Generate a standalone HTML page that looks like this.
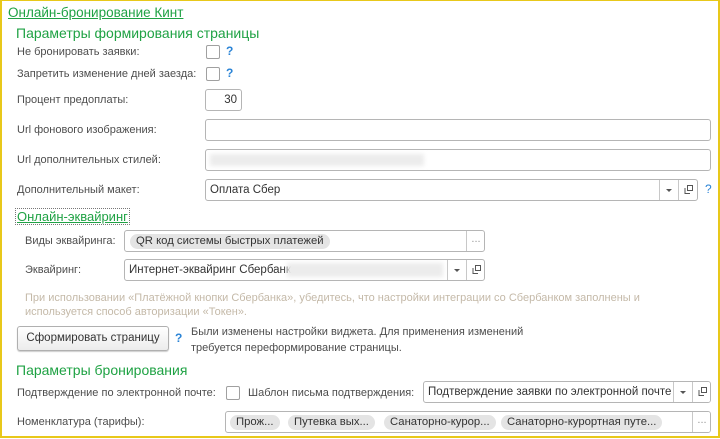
<!DOCTYPE html>
<html><head><meta charset="utf-8"><style>
body{margin:0;width:720px;height:439px;background:#fff;position:relative;overflow:hidden;font-family:"Liberation Sans",Arial,sans-serif;font-size:11px;color:#4d4d4d}
.frame{position:absolute;left:0;top:0;width:716px;height:435px;border:2px solid #e8c81a;border-top:1px solid #e8c81a;}
.a{position:absolute;white-space:nowrap;line-height:14px}
.g{color:#1fa244}
.h{font-size:14px;line-height:17px}
.in{position:absolute;border:1px solid #b5b5b5;border-radius:3px;background:#fff;height:20px;box-sizing:content-box;overflow:hidden}
.in span.t{position:absolute;left:4px;top:4px;color:#333;white-space:nowrap;font-size:11.5px}
.cb{position:absolute;width:12px;height:12px;border:1px solid #a0a0a0;border-radius:2px;background:#fff}
.q{position:absolute;color:#2b84d6;font-weight:bold;font-size:12px}
.btnp{position:absolute;top:0;width:18px;height:20px;border-left:1px solid #c8c8c8;text-align:center;color:#555}
.pill{position:absolute;top:3px;height:15px;line-height:15px;background:#e4e4e4;border-radius:8px;padding:0 6px;color:#333;white-space:nowrap;font-size:11.3px}
.blur{position:absolute;background:#ececec;filter:blur(2px)}
.arr{position:absolute;left:6px;top:9px;width:0;height:0;border-left:3px solid transparent;border-right:3px solid transparent;border-top:3px solid #555}
.cp{position:absolute;left:5px;top:5px;width:9px;height:9px}
</style></head><body>
<div class="frame"></div>
<div class="a g" style="left:8px;top:5px;font-size:13.5px;line-height:16px;text-decoration:underline">Онлайн-бронирование Кинт</div>
<div class="a g h" style="left:16px;top:25px">Параметры формирования страницы</div>

<div class="a" style="left:17px;top:45px">Не бронировать заявки:</div>
<div class="cb" style="left:206px;top:45px"></div><div class="q" style="left:226px;top:44px">?</div>
<div class="a" style="left:17px;top:67px">Запретить изменение дней заезда:</div>
<div class="cb" style="left:206px;top:67px"></div><div class="q" style="left:226px;top:66px">?</div>

<div class="a" style="left:17px;top:93px">Процент предоплаты:</div>
<div class="in" style="left:205px;top:89px;width:35px"><span class="t" style="left:auto;right:4px">30</span></div>

<div class="a" style="left:17px;top:123px">Url фонового изображения:</div>
<div class="in" style="left:205px;top:119px;width:504px"></div>
<div class="a" style="left:17px;top:153px">Url дополнительных стилей:</div>
<div class="in" style="left:205px;top:149px;width:504px"><div class="blur" style="left:4px;top:4px;width:214px;height:12px"></div></div>

<div class="a" style="left:17px;top:183px">Дополнительный макет:</div>
<div class="in" style="left:205px;top:179px;width:491px"><span class="t">Оплата Сбер</span>
<div class="btnp" style="left:453px"><div class="arr"></div></div>
<div class="btnp" style="left:472px"><svg class="cp" viewBox="0 0 9 9"><path d="M3.5 .5h5v5h-5z M1 3v5.5h5" fill="none" stroke="#555" stroke-width="1"/></svg></div></div>
<div class="q" style="left:705px;top:182px;font-weight:normal">?</div>

<div class="a g" style="left:16px;top:209px;font-size:13px;line-height:15px;text-decoration:underline;outline:1px dotted #777;padding:0 1px">Онлайн-эквайринг</div>

<div class="a" style="left:25px;top:234px">Виды эквайринга:</div>
<div class="in" style="left:124px;top:230px;width:359px"><div class="pill" style="left:5px">QR код системы быстрых платежей</div>
<div class="btnp" style="left:341px;color:#999;line-height:16px">...</div></div>
<div class="a" style="left:25px;top:263px">Эквайринг:</div>
<div class="in" style="left:124px;top:259px;width:359px"><span class="t">Интернет-эквайринг Сбербанк</span><div class="blur" style="left:162px;top:3px;width:156px;height:14px"></div>
<div class="btnp" style="left:322px"><div class="arr"></div></div>
<div class="btnp" style="left:341px"><svg class="cp" viewBox="0 0 9 9"><path d="M3.5 .5h5v5h-5z M1 3v5.5h5" fill="none" stroke="#555" stroke-width="1"/></svg></div></div>

<div class="a" style="left:25px;top:291px;color:#c4b9a8">При использовании «Платёжной кнопки Сбербанка», убедитесь, что настройки интеграции со Сбербанком заполнены и</div>
<div class="a" style="left:25px;top:305px;color:#c4b9a8">используется способ авторизации «Токен».</div>

<div style="position:absolute;left:17px;top:326px;width:150px;height:23px;border:1px solid #b0b0b0;border-radius:3px;background:linear-gradient(#fff,#ececec);box-shadow:0 1px 1px #ccc;text-align:center;line-height:23px;color:#333;font-size:11.5px">Сформировать страницу</div>
<div class="q" style="left:175px;top:331px">?</div>
<div class="a" style="left:191px;top:325px">Были изменены настройки виджета. Для применения изменений</div>
<div class="a" style="left:191px;top:341px">требуется переформирование страницы.</div>

<div class="a g h" style="left:16px;top:362px">Параметры бронирования</div>
<div class="a" style="left:17px;top:386px">Подтверждение по электронной почте:</div>
<div class="cb" style="left:226px;top:386px"></div>
<div class="a" style="left:248px;top:386px">Шаблон письма подтверждения:</div>
<div class="in" style="left:423px;top:381px;width:286px"><span class="t">Подтверждение заявки по электронной почте</span>
<div class="btnp" style="left:249px;background:#fff"><div class="arr"></div></div>
<div class="btnp" style="left:268px;background:#fff"><svg class="cp" viewBox="0 0 9 9"><path d="M3.5 .5h5v5h-5z M1 3v5.5h5" fill="none" stroke="#555" stroke-width="1"/></svg></div></div>

<div class="a" style="left:17px;top:415px">Номенклатура (тарифы):</div>
<div class="in" style="left:225px;top:411px;width:484px">
<div class="pill" style="left:4px">Прож...</div>
<div class="pill" style="left:62px">Путевка вых...</div>
<div class="pill" style="left:158px">Санаторно-курор...</div>
<div class="pill" style="left:275px">Санаторно-курортная путе...</div>
<div class="btnp" style="left:466px;color:#999;line-height:16px;background:#fff">...</div></div>
</body></html>
